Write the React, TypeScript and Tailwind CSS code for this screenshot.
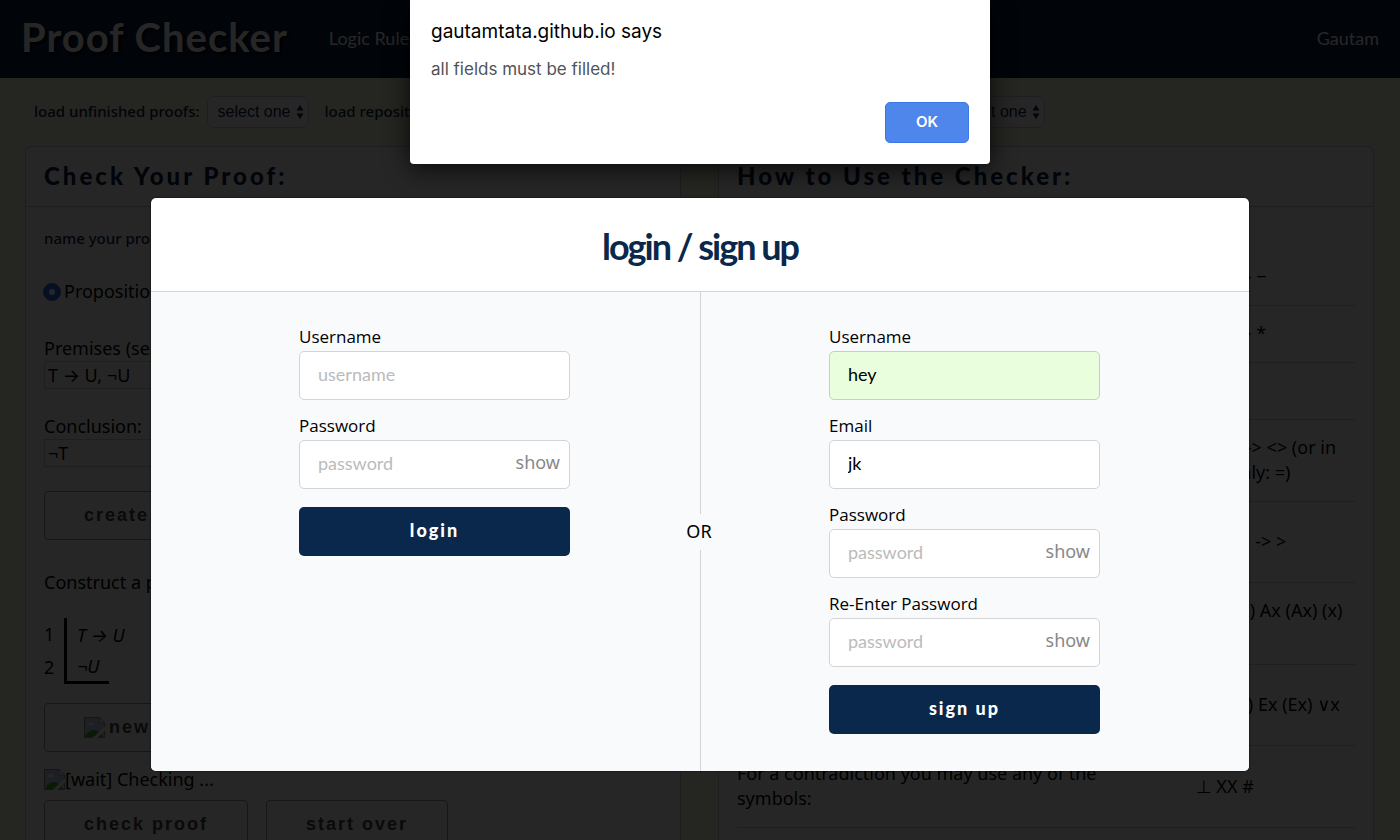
import { ReactNode, useId } from "react";

function SelectOne({ label }: { label: string }) {
  const id = useId();
  return (
    <div className="flex items-center gap-[7px]">
      <label htmlFor={id} className="pb-[2px] text-[15px] font-medium whitespace-nowrap">
        {label}
      </label>
      <div className="relative">
        <select
          id={id}
          className="block h-8 w-[102px] appearance-none rounded-md border border-[#ccd1dd] bg-white pl-[10px] font-['Liberation_Sans',sans-serif] text-[16px]"
        >
          <option>select one</option>
        </select>
        <svg
          viewBox="0 0 8 14"
          className="pointer-events-none absolute top-[9px] right-[5px] h-[14px] w-2"
          fill="currentColor"
        >
          <path d="M4 0 7.5 5.5H.5ZM4 14 .5 8.5h7Z" />
        </svg>
      </div>
    </div>
  );
}

function BrokenImage() {
  return (
    <svg viewBox="0 0 21 21" className="h-[21px] w-[21px] shrink-0">
      <path d="M.5.5H15L20.500 6v14.500H.5Z" fill="#b9cdf0" stroke="#8f8f8f" />
      <path d="M15 .5V6h5.500Z" fill="#fff" stroke="#8f8f8f" strokeWidth=".7" />
      <path d="M3 8a2 2 0 0 1 2-2 3 3 0 0 1 5 2Z" fill="#fff" />
      <path d="M1 20c2-5 6-7 9-7s7 3 9 7Z" fill="#4ca833" />
      <path d="M21 9.500v4L13.500 21H8.500Z" fill="#fff" />
    </svg>
  );
}

function PlainButton({ children }: { children: ReactNode }) {
  return (
    <button
      type="button"
      className="flex h-[49px] items-center gap-1 rounded border border-[#999] bg-white px-[39px] font-['Liberation_Sans',sans-serif] text-[18px] font-bold tracking-[2px] text-[#444]"
    >
      {children}
    </button>
  );
}

function Card({ title, children }: { title: string; children: ReactNode }) {
  return (
    <section className="min-w-0 rounded-md border border-[#c4c6cc] bg-white">
      <h2 className="h-[60px] border-b border-[#c4c6cc] px-[18px] font-[Lato,sans-serif] text-[24px] leading-[58px] font-black tracking-[3px] text-[#0a1c46]">
        {title}
      </h2>
      <div className="px-[18px]">{children}</div>
    </section>
  );
}

const symbolRows: [string, ReactNode][] = [
  ["Not", "¬ ~ ∼ - −"],
  ["And", "∧ ^ & · *"],
  ["Or", "∨ v"],
  [
    "Iff",
    <>
      ↔ ≡ &lt;-&gt; &lt;&gt; (or in
      <br />
      TFL only: =)
    </>,
  ],
  [
    "If",
    <span className="flex h-[49px] items-center">→ ⇒ ⊃ -&gt; &gt;</span>,
  ],
  [
    "For all",
    <>
      ∀x (∀x) Ax (Ax) (x)
      <br />
      ∧x
    </>,
  ],
  [
    "Exists",
    <span className="flex h-[49px] items-center">∃x (∃x) Ex (Ex) ∨x</span>,
  ],
  ["For a contradiction you may use any of the symbols:", "⊥ XX #"],
];

function ProofPage() {
  return (
    <>
      <header className="flex h-[78px] items-center bg-[#0a1c40] px-[21px] font-[Lato,sans-serif] text-[18px] text-white">
        <h1 className="pb-1 text-[40px] leading-[48px] font-bold tracking-[1px] [text-shadow:2px_2px_3px_#000]">
          Proof Checker
        </h1>
        <a href="#rules" className="ml-[41px] pb-px">
          Logic Rules
        </a>
        <a href="#account" className="ml-auto pb-px">
          Gautam
        </a>
      </header>
      <div className="flex h-[68px] items-center gap-4 px-[34px] text-[#0a1c46]">
        <SelectOne label="load unfinished proofs:" />
        <SelectOne label="load repository problems:" />
        <SelectOne label="load your completed repository problems:" />
      </div>
      <main className="grid grid-cols-2 gap-[37px] pr-[26px] pl-[25px] text-[18px] leading-[25px] text-black">
        <Card title="Check Your Proof:">
          <label
            htmlFor="proof-name"
            className="mt-[19px] block text-[15px] font-medium text-[#0a1c46]"
          >
            name your proof:
          </label>
          <label className="-ml-px mt-7 flex items-center gap-[3px]">
            <input
              type="radio"
              defaultChecked
              className="h-[18px] w-[18px] appearance-none rounded-full border-[6px] border-[#2f6fe0] bg-white"
            />
            Propositional
          </label>
          <label htmlFor="premises" className="mt-8 block">
            Premises (separate by “,”):
          </label>
          <input
            id="premises"
            defaultValue="T → U, ¬U"
            className="block h-7 w-full border border-[#ccc] px-[3px]"
          />
          <label htmlFor="conclusion" className="mt-[25px] block">
            Conclusion:
          </label>
          <input
            id="conclusion"
            defaultValue="¬T"
            className="block h-7 w-full border border-[#ccc] px-[3px]"
          />
          <div className="mt-6 flex">
            <PlainButton>create</PlainButton>
          </div>
          <p className="mt-[30px]">Construct a proof:</p>
          <ol className="mt-[23px] leading-8">
            <li className="flex">
              <span className="w-5">1</span>
              <i className="border-l-[3px] border-black pt-px pl-[10px]">T → U</i>
            </li>
            <li className="flex">
              <span className="w-5">2</span>
              <i className="border-b-[3px] border-l-[3px] border-black pr-[10px] pl-[10px] leading-[30px]">
                ¬U
              </i>
            </li>
          </ol>
          <div className="mt-[19px] flex">
            <PlainButton>
              <BrokenImage /> new line
            </PlainButton>
          </div>
          <p className="mt-[15px] flex items-center">
            <BrokenImage />
            [wait] Checking ...
          </p>
          <div className="mt-2 flex gap-[18px]">
            <PlainButton>check proof</PlainButton>
            <PlainButton>start over</PlainButton>
          </div>
        </Card>
        <Card title="How to Use the Checker:">
          <table className="mt-[42px] w-full font-['Noto_Sans','DejaVu_Sans',sans-serif]">
            <tbody>
              {symbolRows.map(([use, symbols]) => (
                <tr key={use} className="border-b border-[#ccc]">
                  <td className="w-[459px] pt-[15px] pr-16 pb-4">{use}</td>
                  <td className="pt-[15px] pb-4">{symbols}</td>
                </tr>
              ))}
            </tbody>
          </table>
        </Card>
      </main>
    </>
  );
}

function Field({
  label,
  type = "text",
  placeholder,
  value,
  filled,
}: {
  label: string;
  type?: string;
  placeholder?: string;
  value?: string;
  filled?: boolean;
}) {
  const id = useId();
  return (
    <div className="mb-[18px]">
      <label
        htmlFor={id}
        className="block pb-[6px] font-['Open_Sans',sans-serif] text-[17px] leading-4"
      >
        {label}
      </label>
      <div className="relative">
        <input
          id={id}
          type={type}
          placeholder={placeholder}
          defaultValue={value}
          className={`block h-[49px] w-full rounded-[5px] border px-[18px] pb-[3px] font-[Lato,sans-serif] text-[18px] text-black placeholder:text-[#bbb] ${
            filled ? "border-[#c3d3b8] bg-[#e9fedd]" : "border-[#d3d4d6] bg-white"
          }`}
        />
        {type === "password" && (
          <button
            type="button"
            className="absolute top-[10px] right-[10px] text-[18px] leading-[25px] text-[#888]"
          >
            show
          </button>
        )}
      </div>
    </div>
  );
}

function SubmitButton({ children }: { children: ReactNode }) {
  return (
    <button
      type="button"
      className="block h-[49px] w-full rounded-[5px] bg-[#0a284b] pb-[2px] font-[Lato,sans-serif] text-[18px] font-black tracking-[2px] text-white"
    >
      {children}
    </button>
  );
}

function LoginDialog() {
  return (
    <div
      role="dialog"
      aria-labelledby="login-title"
      className="mx-[151px] mt-[198px] overflow-hidden rounded-[5px] bg-white shadow-[0_0_2px_#000]"
    >
      <h2
        id="login-title"
        className="h-[94px] border-b border-[#d3d4d6] text-center font-[Lato,sans-serif] text-[36px] leading-[97px] font-bold tracking-[-2px] text-[#0a284b]"
      >
        login / sign up
      </h2>
      <div className="relative grid grid-cols-2 bg-[#f9fafc]">
        <form className="pt-[37px] pr-[130px] pb-[37px] pl-[148px]">
          <Field label="Username" placeholder="username" />
          <Field label="Password" type="password" placeholder="password" />
          <SubmitButton>login</SubmitButton>
        </form>
        <form className="border-l border-[#d3d4d6] pt-[37px] pr-[149px] pb-[37px] pl-[128px]">
          <Field label="Username" value="hey" filled />
          <Field label="Email" value="jk" />
          <Field label="Password" type="password" placeholder="password" />
          <Field label="Re-Enter Password" type="password" placeholder="password" />
          <SubmitButton>sign up</SubmitButton>
        </form>
        <span className="absolute top-1/2 left-1/2 -translate-x-1/2 -translate-y-1/2 bg-[#f9fafc] pr-[6px] pb-[2px] pl-1 text-[18px] leading-[34px]">
          OR
        </span>
      </div>
    </div>
  );
}

function AlertDialog() {
  return (
    <div
      role="alertdialog"
      aria-labelledby="alert-title"
      className="w-[580px] rounded-b-[4px] bg-white px-[21px] pb-[21px] font-[Inter,sans-serif] shadow-[0_4px_24px_#000c]"
    >
      <h2 id="alert-title" className="pt-[19px] text-[19px] leading-[26px] text-black">
        gautamtata.github.io says
      </h2>
      <p className="mt-[13px] text-[17px] leading-[23px] text-[#50545a]">
        all fields must be filled!
      </p>
      <div className="mt-[21px] flex justify-end">
        <button
          type="button"
          className="h-[41px] w-[84px] rounded-[5px] border border-[#3b78e7] bg-[#4f86ec] text-[15px] font-semibold text-white"
        >
          OK
        </button>
      </div>
    </div>
  );
}

export default function App() {
  return (
    <div className="relative h-screen overflow-hidden bg-[#f8f8dc] font-['Noto_Sans',Inter,'DejaVu_Sans',sans-serif] text-black">
      <ProofPage />
      <div className="absolute inset-0 bg-black/85">
        <LoginDialog />
      </div>
      <div className="absolute inset-x-0 top-0 flex justify-center">
        <AlertDialog />
      </div>
    </div>
  );
}
